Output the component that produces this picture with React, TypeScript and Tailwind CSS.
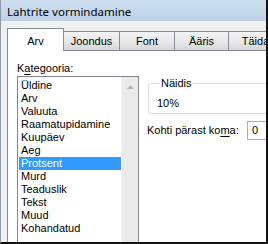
import React from "react";

const items = [
  "Üldine",
  "Arv",
  "Valuuta",
  "Raamatupidamine",
  "Kuupäev",
  "Aeg",
  "Protsent",
  "Murd",
  "Teaduslik",
  "Tekst",
  "Muud",
  "Kohandatud",
];

const tabs = [
  { label: "Joondus", w: "w-[56px]" },
  { label: "Font", w: "w-[55px]" },
  { label: "Ääris", w: "w-[54px]" },
  { label: "Täida", w: "w-[54px]" },
];

export default function App() {
  return (
    <div className="w-[268px] h-[244px] overflow-hidden flex flex-col bg-[#f0f0f0] border-l border-l-[#8d99a6] border-r-2 border-r-[#111] border-b-2 border-b-[#111] font-['Liberation_Sans',Arial,sans-serif] text-[11px] text-black">
      <div className="h-[21px] shrink-0 bg-linear-to-b from-[#cddef0] to-[#bfd2e8] pl-[6px] pt-[3px] leading-[18px] text-[11.5px] font-['Noto_Sans',sans-serif] text-black whitespace-nowrap">
        Lahtrite vormindamine
      </div>
      <div className="flex-1 min-h-0 flex flex-col pl-[6px] pt-[7px]">
        <div className="flex items-end h-[22px] shrink-0 whitespace-nowrap">
          <div className="relative z-10 -mb-px w-[57px] h-[23px] shrink-0 bg-white border-t border-l border-r border-[#898c95] pt-[6px] leading-[13px] text-center">
            Arv
          </div>
          {tabs.map((t) => (
            <div
              key={t.label}
              className={`${t.w} h-[19px] shrink-0 bg-linear-to-b from-[#f3f3f3] via-[#e9e9e9] to-[#d6d6d6] border-t border-r border-[#898c95] pt-[3px] leading-[13px] text-center`}
            >
              {t.label}
            </div>
          ))}
        </div>
        <div className="flex-1 min-h-0 overflow-hidden bg-white border-t border-l border-[#898c95] pl-[9px] pt-[11px]">
          <div className="leading-[13px] mb-px whitespace-nowrap">
            K<span className="underline underline-offset-[2px]">a</span>tegooria:
          </div>
          <div className="flex items-start">
            <div className="w-[122px] h-[190px] shrink-0 border border-[#828790] flex">
              <div className="flex-1 pt-[2px]">
                {items.map((it) => (
                  <div
                    key={it}
                    className={`ml-px w-[102px] h-[13px] leading-[13px] pl-[2px] whitespace-nowrap ${
                      it === "Protsent" ? "bg-[#3399ff] text-white" : ""
                    }`}
                  >
                    {it}
                  </div>
                ))}
              </div>
              <div className="w-[17px] shrink-0 bg-[#eaeaea] border-l border-l-[#f4f4f4] flex justify-center pt-[8px]">
                <svg width="7" height="4" viewBox="0 0 7 4">
                  <path d="M0 4 L3.5 0 L7 4 Z" fill="#b4b4b4" />
                </svg>
              </div>
            </div>
            <div className="ml-[8px] w-[200px] shrink-0">
              <fieldset className="ml-px mt-px border border-[#d5dfe5] rounded-[3px] pl-[8px] pb-[3px]">
                <legend className="ml-[3px] px-px leading-[13px]">Näidis</legend>
                <div className="mt-[7px] leading-[13px]">10%</div>
              </fieldset>
              <div className="mt-[7px] flex items-center h-[19px]">
                <div className="w-[100px] shrink-0 leading-[13px] whitespace-nowrap">
                  Kohti pärast ko<span className="underline underline-offset-[2px]">m</span>a:
                </div>
                <div className="w-[80px] h-[19px] shrink-0 border border-[#abadb3] pl-[4px] leading-[17px]">
                  0
                </div>
              </div>
            </div>
          </div>
        </div>
      </div>
    </div>
  );
}
